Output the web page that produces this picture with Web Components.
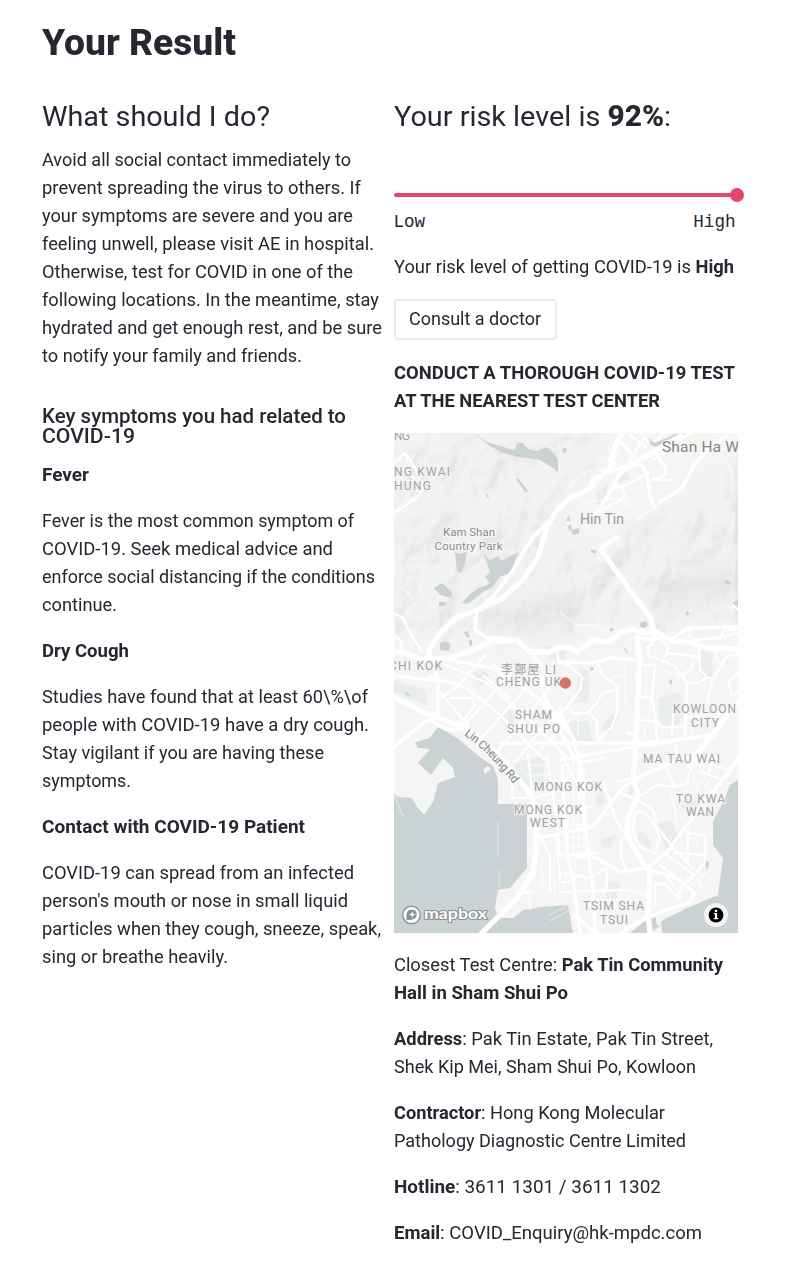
<!DOCTYPE html>
<html lang="en">
<head>
<meta charset="utf-8">
<title>Your Result</title>
<style>
body{margin:0;background:#fff;color:#262730;font-family:Roboto,"Noto Sans",sans-serif}
</style>
</head>
<body>
<result-page></result-page>
<script>
const define=(name,html,extra)=>customElements.define(name,class extends HTMLElement{
  constructor(){super();const t=document.createElement('template');t.innerHTML=html;
    this.attachShadow({mode:'open'}).append(t.content.cloneNode(true));}
  connectedCallback(){if(extra)extra(this)}
});

// One line of copy, set so that it spans the width in its "w" attribute.
define('text-line',`<style>:host{display:block;white-space:nowrap}span{display:inline-block;transform-origin:0 50%}</style><span><slot></slot></span>`,el=>{
  const w=+el.getAttribute('w');if(!w)return;
  const s=el.shadowRoot.querySelector('span');
  s.style.transform='scaleX('+(w/s.getBoundingClientRect().width).toFixed(4)+')';
});

define('text-block',`<style>
:host{display:block;font-size:17.5px;line-height:28px;margin-bottom:18px}
:host([kind=title]){font-size:36px;line-height:40px;font-weight:800;margin-bottom:37px}
:host([kind=head]){font-size:28px;line-height:34px;margin-bottom:12px}
:host([kind=sub]){font-size:19.6px;line-height:20px;font-weight:500;margin:37px 0 14px}
:host([kind=bold]){font-weight:700}
</style><slot></slot>`);

define('risk-slider',`<style>
:host{display:block;box-sizing:border-box;margin:53px 0 18px;padding-top:6px;height:48px}
.track{position:relative;width:343px;height:4px;border-radius:2px;background:#e3486a}
.thumb{position:absolute;right:-7px;top:-5px;width:14px;height:14px;border-radius:50%;background:#e3486a}
.labels{display:flex;justify-content:space-between;width:342px;margin-top:11px;font:17.6px/28px "Liberation Mono",monospace}
</style><div class="track"><i class="thumb"></i></div><div class="labels"><span>Low</span><span>High</span></div>`);

define('outline-button',`<style>
:host{display:block;margin-bottom:19px}
button{display:block;box-sizing:border-box;width:163px;height:41px;border:2px solid #e6eaf1;border-radius:4px;background:#fff;color:inherit;font:17.5px/28px Roboto,sans-serif;padding:4px 0 5px 13px;text-align:left}
</style><button><slot></slot></button>`);

define('centre-map',`<style>
:host{display:block;width:344px;height:500px;margin-bottom:18px}
svg{display:block}
.w{fill:#cad2d4}.g{fill:#e9edec}
.a,.b,.c,.d{fill:none;stroke:#fff;stroke-linejoin:round;stroke-linecap:round}
.a{stroke-width:5.4}.b{stroke-width:3.6}.c{stroke-width:2.3}.d{stroke-width:1}
.lab{font:12px Roboto,"Noto Sans CJK TC",sans-serif;fill:#a1a1a1;stroke:#f6f6f5;stroke-width:2px;paint-order:stroke;stroke-linejoin:round}
</style>
<svg width="344" height="500" viewBox="394 433 344 500">
<defs>
<filter id="hill" x="0" y="0" width="100%" height="100%" color-interpolation-filters="sRGB">
<feTurbulence type="fractalNoise" baseFrequency=".03 .024" numOctaves="4" seed="8"/>
<feColorMatrix values="0 0 0 0 0  0 0 0 0 0  0 0 0 0 0  1 0 0 0 0"/>
<feGaussianBlur stdDeviation="1"/>
<feDiffuseLighting surfaceScale="8" lighting-color="#fff" diffuseConstant="1.12"><feDistantLight azimuth="225" elevation="60"/></feDiffuseLighting>
<feGaussianBlur stdDeviation=".8"/>
<feColorMatrix values=".14 0 0 0 .814  0 .14 0 0 .814  0 0 .14 0 .811  0 0 0 1 0"/>
</filter>
<filter id="soft"><feGaussianBlur stdDeviation="9"/></filter>
<mask id="hills" maskUnits="userSpaceOnUse" x="394" y="433" width="344" height="500"><path filter="url(#soft)" fill="#fff" d="M380 420H600L592 470L550 500L590 550L660 510L705 480L750 460V620L640 628L540 640L480 640L420 655L380 640Z"/></mask>
</defs>
<rect x="394" y="433" width="344" height="500" fill="#f5f5f4"/>
<rect x="394" y="433" width="344" height="500" filter="url(#hill)" mask="url(#hills)"/>
<g fill="#cfcfce" opacity=".25" filter="url(#soft)"><path d="M650 600L690 570L725 560L738 580V600L700 605L660 620Z"/><path d="M480 615L510 605L560 590L590 600L540 635L490 630Z"/></g>
<g class="g">
<path d="M394 680L425 690L428 706L394 693ZM473 673L485 668L490 678L480 687ZM498 716L508 707L516 718L508 731ZM545 645L566 649L566 662L548 659ZM580 667L590 672L588 702L575 702ZM596 492L608 485L606 498L598 510ZM615 480L628 472L630 479L618 484ZM700 648L712 656L713 676L703 680L698 668ZM658 698L680 692L684 715L674 730L660 725ZM653 617L665 623L667 635L655 633ZM567 721L588 721L593 743L568 738ZM601 726L612 714L620 716L609 734ZM600 840L621 833L611 846L602 848ZM514 758L526 770L527 795L518 790ZM653 824L672 821L680 840L666 849ZM596 795L604 792L604 803L597 805ZM607 881L620 883L616 900L606 900ZM638 830L651 840L649 849L638 841Z"/>
<path d="M520 760L544 757V784L527 786ZM631 783L638 790L627 797ZM684 796L700 803L692 814L681 807Z"/>
</g>
<g class="w">
<path d="M473 433L487 442L503 447L515 450L517 443L523 443L528 449L537 451L547 447L553 452L558 460L558 472L550 466L540 460L527 458L518 457L503 453L490 446Z"/>
<path d="M516 479L518 478L528 491L526 493ZM487 492L489 499L486 496ZM563 448L567 448L566 453L562 452Z"/>
<path d="M455 552L459 554L467 552L465 563L461 573L457 571L456 561ZM483 553L490 560L498 556L501 561L519 552L514 563L512 572L500 577L493 587L483 592L473 600L467 604L462 603L470 594L476 590L490 583L485 577L490 572L487 563ZM434 588L442 583L452 592L452 598L440 595ZM439 602L446 602L446 605L439 607Z"/>
<path d="M440 643L446 641L450 644L449 651L440 650ZM464 632L468 631L470 637L466 637ZM469 640L472 640L472 646L469 645ZM648 438L654 443L664 439L678 433H690L675 442L656 447L651 445ZM640 623L646 621L648 625L645 628L640 627ZM591 549L597 551L595 554L591 552ZM725 580L731 582L729 585L725 583ZM686 611L689 612L689 615L686 615ZM610 628L613 628L613 631L610 631ZM624 647L628 653L627 654L624 649ZM590 667L594 668L593 671L590 670ZM670 679L672 680L672 685L669 683ZM405 691L412 696L406 695Z"/>
<path d="M566 521L569 515L570 521ZM568 526L571 524L572 530L569 531ZM572 530L579 528L579 534L572 535ZM733 602L738 600V606L733 605Z"/>
<path d="M438 727L457 738L480 757L493 766L498 779V804H527V868L510 888L498 890L495 908L498 918L513 918L523 910L541 907L568 905L573 933H394V793L398 797L412 798L417 807L424 815L433 802L438 783L455 777L453 768L443 758L431 775L418 763L430 749L418 748L415 742L430 738Z"/>
<path d="M738 780L730 785L725 798L713 822V845L723 858L718 895L687 908L667 918L661 922L662 933H738ZM630 933L645 921L660 916V926L650 933ZM705 860L709 862L708 869L706 868Z"/>
</g>
<path fill="#f5f5f4" d="M483 770L488 766L491 769L485 774ZM656 913L661 912L661 925L658 926L656 923Z"/>
<path d="M498 822V857M499 870V888M394 793L402 815L404 816M549 915L568 905M550 921L570 910" fill="none" stroke="#e8ebea" stroke-width="1"/>

<g class="d">
<path d="M394 513Q418 500 420 480M394 466L418 492M397 475L415 455M405 453L414 482M397 587Q405 587 412 599M407 610L415 604M570 490Q580 465 606 471M612 440L608 450L620 453M580 505Q610 495 630 500M620 537L634 522L655 507M637 510L620 500M725 460Q735 470 732 482M560 612L576 625L596 625L607 632M738 433L724 450"/>
<path d="M595 669L580 682M605 680L625 675M625 660V700M646 668V695M650 698V718M645 725V740M665 670L680 678M675 690L696 698M693 700V735M600 700L612 707M578 713V735M565 690L580 699M548 690L561 711L547 725M540 690L528 704M460 684L485 707M455 672L495 711M467 662L488 671M492 665L478 674M520 661V652L546 667M506 684L520 694M498 691L514 704M504 722L520 735"/>
<path d="M528 765H546M526 775H549M530 785H551M568 764V855M573 762V850M578 762V852M584 766V855M560 770H585M560 780H587M562 792H590M562 807H592M563 825H594M565 838H596M567 846H597M560 858H580M575 860V898M569 865L563 890M535 840L552 842M542 860V890M554 845V900M522 875L550 890M530 893V910M613 790L626 780M610 800L622 806M604 815H616M612 842L622 830M630 848L641 860M661 777L676 773M671 791L676 819M650 790L658 802M692 770L700 795M698 762L712 795M692 780L713 788M697 835L698 856M675 848L696 837M690 885L710 870M697 890L715 876M703 891L697 877M655 883L666 887M640 890L625 900M599 900H628M601 905V925M588 900L600 925M610 890V910M622 892L605 925"/>
</g>
<g class="c">
<path d="M394 463L405 453L415 468L423 487L418 497L394 513M655 453L665 467V475L652 480M612 483L622 487L645 475M613 487L622 488L625 497L597 513M672 480L652 480M629 460L643 440M646 447L630 435M641 433L648 442M664 433L658 440M653 460L678 443M394 613L403 618L410 633L422 652M394 636L402 642L400 653M615 468L608 459L617 464"/>
<path d="M450 660L492 668L540 700L570 735M440 662L487 683L530 720L570 760M430 676L468 689L500 715L545 760M438 690L470 727M463 727L510 674M480 740L532 682M497 752L548 690M515 762L562 706M455 690L485 655M450 698H472L475 706L462 723M438 700L460 684M493 665L530 690L553 717M484 676L510 698M517 665L550 690M527 745L563 710M540 750L570 720"/>
<path d="M533 653L543 670L542 690L553 710L570 733M557 647L558 660L570 665M560 662L573 668L582 677L580 690L567 707L560 715M567 707L573 713H590L597 722L598 742M597 663L603 675L618 687L617 713L612 727L598 740M618 689L602 693L597 703L588 712M657 638L648 647V655L663 662L668 648L665 642ZM640 665H655L652 697L655 717L657 742M640 697H652M638 720L657 722L663 727H683M663 660L675 667L687 683L685 740M687 684L700 682L707 677L713 679M668 653L698 657M693 655L692 668L683 675M699 643L700 670L707 677M689 628L690 637L698 640L720 637L738 633M738 653L727 657L713 678L707 702M738 672L728 683L732 695L738 692M715 650L717 660L725 667M675 743L678 758M672 735L673 715M720 639L724 630H738M733 605L738 610M685 717H703M715 736L720 710"/>
<path d="M528 755L533 798L570 788M547 755L557 822L560 855M540 835L550 855V892M533 892L517 893M537 838L570 832M556 834L560 882L570 882M560 892L627 890L649 896M560 873L590 878L607 868M560 855L597 853M620 793L638 800L653 810L657 827L675 850L693 868M622 837L621 856L625 868M635 813L632 832L640 847L655 854L660 837L650 817L640 811ZM642 795L657 785L675 787L688 783V775L693 763L717 758M663 762L674 786M688 830V862M687 833L705 835V862L677 895M675 853L704 855M667 855L693 874M660 865L675 877M655 883L666 884L677 898M655 884V905M668 878L680 894M680 900V888L690 877M603 782L617 822L632 842M607 868V888M500 757L512 785V798H533M633 778L617 782M700 772L724 780M705 762L728 770M713 758L709 772M560 752L578 785L588 852M560 807H592M580 762L605 758"/>
</g>
<g class="b">
<path d="M588 490L595 477L623 467L642 457L677 437L682 433M597 513L613 487L620 473L637 463L660 450L690 433M622 443L637 460L647 473L650 497L655 507M660 502L683 487L693 467L707 450L727 435M550 520L533 537L523 553L513 570L493 597L477 610L475 630L487 638L503 638L517 640M670 640L688 628L738 627M560 662L593 663L610 658L638 660M638 638L652 640L657 632M394 675L413 678L457 683M394 747L423 723L438 713V680L430 655M430 719Q450 735 461 727"/>
<path d="M560 760L627 748L660 743L712 735M500 743H640L693 738M560 833L593 827L623 787L643 775L667 765L700 752M562 765L567 852L575 892L580 933M580 762L588 852L593 888L595 933M560 713L574 740L579 762M545 700L575 760"/>
<path d="M620 933L647 917L690 902L695 893L677 878L650 870M738 758L727 775L713 792L687 825L667 852L647 868L620 872L597 858L573 855M575 915L595 933M635 735L628 733"/>
</g>
<g class="a">
<path d="M622 433L615 447L610 467L588 490L570 498L557 510L547 527L538 557L523 580L500 600L477 610L457 617L440 633L430 648L427 660"/>
<path d="M394 652L405 653L423 660L450 658L473 650L490 642L517 640L530 652L550 652Q564 643 577 652L593 640L608 642L622 632L633 629L643 633L657 632L670 640L693 643L707 648L738 649"/>
<path d="M617 538L605 545Q599 549 603 553L652 620L653 633M637 638L640 657L638 700L635 760L633 778L638 795L628 818L627 835L640 858L650 872L648 915L650 933M738 702L723 720L712 735L700 750L690 765"/>
<path d="M394 697L423 712L463 727L490 747L503 760L523 785L533 798L537 838L533 872L517 898L482 933"/>
</g>

<g class="lab">
<text x="394" y="440" textLength="16">NG</text>
<text x="394" y="476" textLength="56">NG KWAI</text><text x="394" y="490" textLength="37">HUNG</text>
<text x="389" y="670" textLength="53">CHI KOK</text>
<text x="501" y="674" textLength="55">李鄭屋 LI</text><text x="496" y="686" textLength="65">CHENG UK</text>
<text x="515" y="719" textLength="37">SHAM</text><text x="507" y="733" textLength="53">SHUI PO</text>
<text x="673" y="713" textLength="63">KOWLOON</text><text x="691" y="727" textLength="28">CITY</text>
<text x="643" y="763" textLength="77">MA TAU WAI</text>
<text x="534" y="791" textLength="68">MONG KOK</text><text x="514" y="814" textLength="68">MONG KOK</text><text x="530" y="827" textLength="35">WEST</text>
<text x="676" y="803" textLength="49">TO KWA</text><text x="686" y="816" textLength="28">WAN</text>
<text x="583" y="910" textLength="61">TSIM SHA</text><text x="600" y="924" textLength="28">TSUI</text>
<g fill="#8b8b8b"><text x="443" y="535.5" textLength="52" font-size="11.5">Kam Shan</text><text x="434.5" y="549.5" textLength="68" font-size="11.5">Country Park</text></g>
<text x="662" y="452" textLength="77" style="font-size:15.5px;fill:#858585">Shan Ha W</text>
<text x="580" y="524" textLength="44" style="font-size:14px;fill:#999">Hin Tin</text>
<path id="rd" d="M464 735Q489 752 515 786" fill="none" stroke="none"/>
<text style="font-size:11.5px;fill:#858585"><textPath href="#rd" textLength="70">Lin Cheung Rd</textPath></text>
</g>
<circle cx="565.3" cy="683" r="5.7" fill="#d07468"/>
<g>
<circle cx="411.5" cy="915" r="8.8" fill="#fff" stroke="#8c9395" stroke-width="1.4"/>
<path d="M406.6 920Q405 908 413 909.7A4.9 4.9 0 0 1 416.8 914.4Q416.5 920.5 406.6 920Z" fill="#8c9395"/>
<path d="M412.3 911.4L413.2 913.6L415.4 914.5L413.2 915.4L412.3 917.6L411.4 915.4L409.2 914.5L411.4 913.6Z" fill="#fff"/>
<text x="424" y="919.3" textLength="63" lengthAdjust="spacingAndGlyphs" font-family="Lato,sans-serif" font-weight="700" font-size="16" fill="#fff" stroke="#8c9395" stroke-width="2.2" paint-order="stroke" stroke-linejoin="round">mapbox</text>
</g>
<rect x="704" y="903" width="24" height="24" rx="12" fill="#fff" fill-opacity=".75"/>
<circle cx="716" cy="915" r="7.4" fill="#000"/>
<path d="M713.8 913H717.1V918H718.3V919.3H713.7V918H714.9V914.3H713.8Z" fill="#fff"/><circle cx="716" cy="911" r="1.3" fill="#fff"/>
</svg>`);

define('result-page',`<style>
:host{display:block;box-sizing:border-box;height:1284px;overflow:hidden;padding:23px 0 0 42px}
.cols{display:grid;grid-template-columns:341px 344px;column-gap:10.5px}
b{font-weight:700}
.pct{font-weight:800;font-size:29px;line-height:1}
</style>
<text-block kind="title"><text-line w="194">Your Result</text-line></text-block>
<div class="cols">
<section>
<text-block kind="head"><text-line w="228">What should I do?</text-line></text-block>
<text-block><text-line w="309">Avoid all social contact immediately to</text-line><text-line w="319">prevent spreading the virus to others. If</text-line><text-line w="311">your symptoms are severe and you are</text-line><text-line w="332">feeling unwell, please visit AE in hospital.</text-line><text-line w="311">Otherwise, test for COVID in one of the</text-line><text-line w="337">following locations. In the meantime, stay</text-line><text-line w="340">hydrated and get enough rest, and be sure</text-line><text-line w="260">to notify your family and friends.</text-line></text-block>
<text-block kind="sub"><text-line w="304">Key symptoms you had related to</text-line><text-line w="93">COVID-19</text-line></text-block>
<text-block kind="bold"><text-line w="47">Fever</text-line></text-block>
<text-block><text-line w="312">Fever is the most common symptom of</text-line><text-line w="291">COVID-19. Seek medical advice and</text-line><text-line w="333">enforce social distancing if the conditions</text-line><text-line w="75">continue.</text-line></text-block>
<text-block kind="bold"><text-line w="87">Dry Cough</text-line></text-block>
<text-block><text-line w="326">Studies have found that at least 60\\%\\of</text-line><text-line w="327">people with COVID-19 have a dry cough.</text-line><text-line w="282">Stay vigilant if you are having these</text-line><text-line w="89">symptoms.</text-line></text-block>
<text-block kind="bold"><text-line w="263">Contact with COVID-19 Patient</text-line></text-block>
<text-block><text-line w="312">COVID-19 can spread from an infected</text-line><text-line w="306">person's mouth or nose in small liquid</text-line><text-line w="339">particles when they cough, sneeze, speak,</text-line><text-line w="186">sing or breathe heavily.</text-line></text-block>
</section>
<section>
<text-block kind="head"><text-line w="277">Your risk level is <b class="pct">92%</b>:</text-line></text-block>
<risk-slider></risk-slider>
<text-block><text-line w="340">Your risk level of getting COVID-19 is <b>High</b></text-line></text-block>
<outline-button><text-line w="132">Consult a doctor</text-line></outline-button>
<text-block kind="bold"><text-line w="341">CONDUCT A THOROUGH COVID-19 TEST</text-line><text-line w="266">AT THE NEAREST TEST CENTER</text-line></text-block>
<centre-map></centre-map>
<text-block><text-line w="329">Closest Test Centre: <b>Pak Tin Community</b></text-line><text-line w="174"><b>Hall in Sham Shui Po</b></text-line></text-block>
<text-block><text-line w="319"><b>Address</b>: Pak Tin Estate, Pak Tin Street,</text-line><text-line w="302">Shek Kip Mei, Sham Shui Po, Kowloon</text-line></text-block>
<text-block><text-line w="271"><b>Contractor</b>: Hong Kong Molecular</text-line><text-line w="292">Pathology Diagnostic Centre Limited</text-line></text-block>
<text-block><text-line w="267"><b>Hotline</b>: 3611 1301 / 3611 1302</text-line></text-block>
<text-block><text-line w="308"><b>Email</b>: COVID_Enquiry@hk-mpdc.com</text-line></text-block>
</section>
</div>`);
</script>
</body>
</html>
